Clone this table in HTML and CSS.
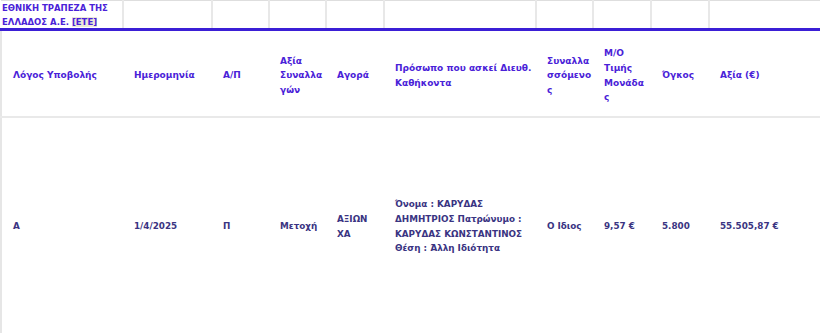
FILE: index.html
```html
<!DOCTYPE html>
<html lang="el">
<head>
<meta charset="utf-8">
<title>Συναλλαγή</title>
<link rel="stylesheet" href="styles.css">
</head>
<body>
<table class="grid">
  <colgroup>
    <col class="c1"><col class="c2"><col class="c3"><col class="c4"><col class="c5">
    <col class="c6"><col class="c7"><col class="c8"><col class="c9"><col class="c10">
  </colgroup>
  <tr class="top">
    <td class="issuer"><div class="issuer-text">ΕΘΝΙΚΗ ΤΡΑΠΕΖΑ ΤΗΣ<br>ΕΛΛΑΔΟΣ Α.Ε. <span class="tick">[ΕΤΕ]</span></div></td>
    <td></td><td></td><td></td><td></td><td></td><td></td><td></td><td></td><td></td>
  </tr>
  <tr class="head">
    <th>Λόγος Υποβολής</th>
    <th>Ημερομηνία</th>
    <th>Α/Π</th>
    <th>Αξία<br>Συναλλα<br>γών</th>
    <th>Αγορά</th>
    <th>Πρόσωπο που ασκεί Διευθ.<br>Καθήκοντα</th>
    <th>Συναλλα<br>σσόμενο<br>ς</th>
    <th>Μ/Ο<br>Τιμής<br>Μονάδα<br>ς</th>
    <th>Όγκος</th>
    <th>Αξία (€)</th>
  </tr>
  <tr class="data">
    <td>Α</td>
    <td>1/4/2025</td>
    <td>Π</td>
    <td>Μετοχή</td>
    <td>ΑΞΙΩΝ<br>ΧΑ</td>
    <td>Όνομα : ΚΑΡΥΔΑΣ<br>ΔΗΜΗΤΡΙΟΣ Πατρώνυμο :<br>ΚΑΡΥΔΑΣ ΚΩΝΣΤΑΝΤΙΝΟΣ<br>Θέση : Άλλη Ιδιότητα</td>
    <td>Ο Ιδιος</td>
    <td>9,57 €</td>
    <td>5.800</td>
    <td>55.505,87 €</td>
  </tr>
</table>
</body>
</html>
```
FILE: styles.css
```css
html, body {
  margin: 0;
  padding: 0;
  background: #ffffff;
}
body {
  font-family: "DejaVu Sans", "Liberation Sans", sans-serif;
  font-size: 9px;
}
.grid {
  border-collapse: collapse;
  table-layout: fixed;
  width: 820px;
}
.c1 { width: 122px; }
.c2 { width: 89px; }
.c3 { width: 57px; }
.c4 { width: 57px; }
.c5 { width: 58px; }
.c6 { width: 152px; }
.c7 { width: 57px; }
.c8 { width: 58px; }
.c9 { width: 58px; }
.c10 { width: 112px; }

.top td {
  height: 27px;
  padding: 0;
  border-top: 1px solid #dedede;
  border-right: 2px solid #e8e8e8;
  border-bottom: 3px solid #3b1fd6;
  vertical-align: top;
}
.top td:last-child {
  border-right: 1px solid #dedede;
}
.issuer {
  color: #4a22d8;
  font-weight: bold;
  font-size: 8.5px;
  white-space: nowrap;
}
.issuer-text {
  height: 26px;
  line-height: 14px;
  padding-left: 1px;
  margin-top: 0;
}
.tick {
  background: #ece8d8;
  color: #4a22d8;
}
.head th, .data td {
  text-align: left;
  vertical-align: middle;
  padding: 0 4px 0 11px;
  line-height: 14.6px;
  white-space: nowrap;
}
.head th {
  height: 81px;
  padding-top: 4px;
  color: #4a22d8;
  font-weight: bold;
  border-bottom: 2px solid #e9e9e9;
}
.data td {
  height: 213px;
  padding-top: 2px;
  color: #3a3482;
  font-weight: bold;
  font-size: 8.8px;
}
.head th:first-child, .data td:first-child {
  border-left: 2px solid #e6e6e6;
}
```
